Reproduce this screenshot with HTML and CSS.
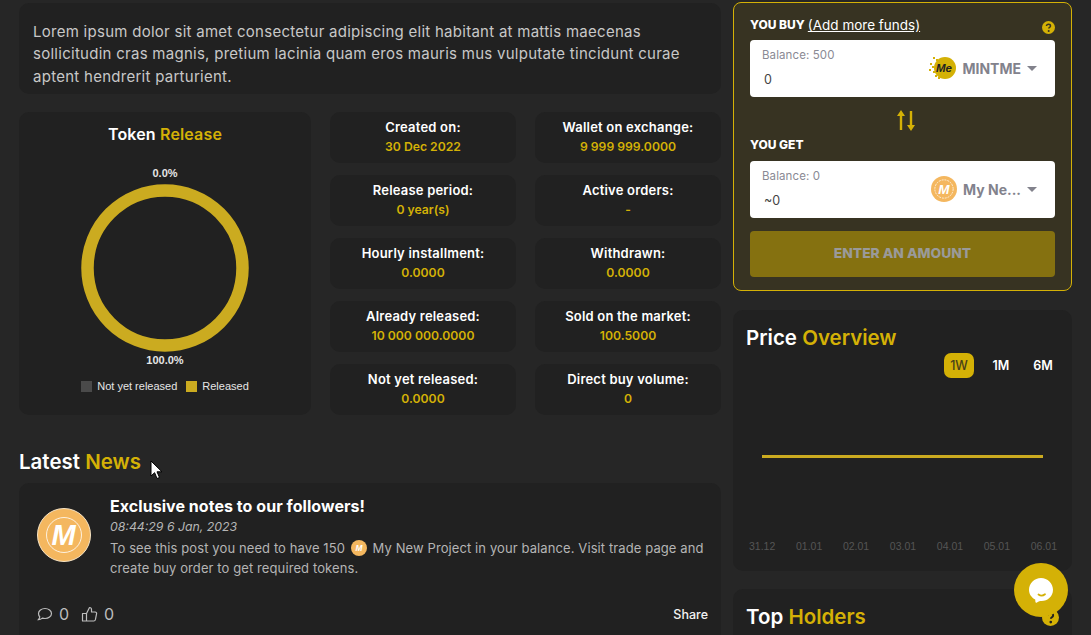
FILE: index.html
```html
<!DOCTYPE html>
<html lang="en">
<head>
    <meta charset="UTF-8">
    <meta name="viewport" content="width=device-width, initial-scale=1.0">
    <title>My New Project</title>
    <link rel="stylesheet" href="styles.css">
</head>
<body>
    <div class="page">
        <div class="left-col">
            <div class="card intro">
                Lorem ipsum dolor sit amet consectetur adipiscing elit habitant at mattis maecenas sollicitudin cras magnis, pretium lacinia quam eros mauris mus vulputate tincidunt curae aptent hendrerit parturient.
            </div>

            <div class="release-row">
                <div class="card release">
                    <h3 class="release-title">Token <span class="gold">Release</span></h3>
                    <div class="donut-label">0.0%</div>
                    <svg class="donut" width="168" height="168" viewBox="0 0 168 168">
                        <circle cx="84" cy="84" r="77.5" fill="none" stroke="#cbab20" stroke-width="12.5"/>
                    </svg>
                    <div class="donut-label">100.0%</div>
                    <div class="legend">
                        <span class="swatch swatch-grey"></span><span class="legend-text">Not yet released</span>
                        <span class="swatch swatch-gold"></span><span class="legend-text">Released</span>
                    </div>
                </div>

                <div class="stats">
                    <div class="card stat"><div class="stat-name">Created on:</div><div class="stat-value">30 Dec 2022</div></div>
                    <div class="card stat"><div class="stat-name">Wallet on exchange:</div><div class="stat-value">9 999 999.0000</div></div>
                    <div class="card stat"><div class="stat-name">Release period:</div><div class="stat-value">0 year(s)</div></div>
                    <div class="card stat"><div class="stat-name">Active orders:</div><div class="stat-value">-</div></div>
                    <div class="card stat"><div class="stat-name">Hourly installment:</div><div class="stat-value">0.0000</div></div>
                    <div class="card stat"><div class="stat-name">Withdrawn:</div><div class="stat-value">0.0000</div></div>
                    <div class="card stat"><div class="stat-name">Already released:</div><div class="stat-value">10 000 000.0000</div></div>
                    <div class="card stat"><div class="stat-name">Sold on the market:</div><div class="stat-value">100.5000</div></div>
                    <div class="card stat"><div class="stat-name">Not yet released:</div><div class="stat-value">0.0000</div></div>
                    <div class="card stat"><div class="stat-name">Direct buy volume:</div><div class="stat-value">0</div></div>
                </div>
            </div>

            <h2 class="news-heading">Latest <span class="gold">News</span></h2>

            <div class="card news">
                <div class="news-top">
                    <svg class="news-avatar" width="54" height="54" viewBox="0 0 54 54">
                        <circle cx="27" cy="27" r="26.5" fill="#f4b75f" stroke="#f6e3c4" stroke-width="1"/>
                        <circle cx="27" cy="27" r="17.5" fill="none" stroke="#fff" stroke-width="0.8"/>
                        <text class="logo-m" x="26.5" y="37" font-size="29" text-anchor="middle">M</text>
                    </svg>
                    <div class="news-body">
                        <div class="news-title">Exclusive notes to our followers!</div>
                        <div class="news-date">08:44:29 6 Jan, 2023</div>
                        <p class="news-text"><span>To see this post you need to have 150</span>
                            <svg class="news-token" width="16" height="16" viewBox="0 0 54 54">
                                <circle cx="27" cy="27" r="27" fill="#f4b75f"/>
                                <text class="logo-m" x="26.5" y="37" font-size="28" text-anchor="middle">M</text>
                            </svg>
                            <span>My New Project in your balance. Visit trade page and</span><br>
                            <span>create buy order to get required tokens.</span></p>
                    </div>
                </div>
                <div class="news-foot">
                    <svg width="17" height="17" viewBox="0 0 17 17" fill="none" stroke="#bdbdbd" stroke-width="1.2">
                        <path d="M9 2.5c3.6 0 6.5 2.2 6.5 5s-2.900 5-6.500 5c-.9 0-1.800-.1-2.600-.4-1 .8-2.400 1.500-4 1.500.700-.8 1.300-1.800 1.400-2.800C2.900 9.900 2.500 8.700 2.500 7.500c0-2.800 2.900-5 6.500-5z"/>
                    </svg>
                    <span class="count">0</span>
                    <svg class="thumb" width="17" height="17" viewBox="0 0 17 17" fill="none" stroke="#bdbdbd" stroke-width="1.200" stroke-linejoin="round">
                        <path d="M5.500 7.500 8.500 1.500c1.300 0 2 .9 2 2v2.500h3.700c1 0 1.600.8 1.400 1.700l-1.200 6c-.2.800-.8 1.300-1.600 1.300H5.500zM5.500 7.500H1.500v7.500h4"/>
                    </svg>
                    <span class="count">0</span>
                    <span class="share">Share</span>
                </div>
            </div>
        </div>

        <div class="right-col">
            <div class="swap">
                <div class="swap-head">
                    <span class="swap-label">YOU BUY</span>
                    <a class="add-funds" href="#">(Add more funds)</a>
                    <svg class="help" width="13" height="13" viewBox="0 0 13 13">
                        <circle cx="6.500" cy="6.500" r="6.500" fill="#d4b106"/>
                        <path d="M4.500 5.100c0-1.200.9-1.900 2-1.900s2 .7 2 1.700c0 1.400-1.700 1.400-1.700 2.500" fill="none" stroke="#373322" stroke-width="1.500"/>
                        <circle cx="6.700" cy="10" r="1" fill="#373322"/>
                    </svg>
                </div>
                <div class="swap-box">
                    <div class="swap-input">
                        <div class="balance">Balance: 500</div>
                        <div class="amount">0</div>
                    </div>
                    <div class="coin">
                        <svg width="27" height="24" viewBox="0 0 27 24">
                            <circle cx="16" cy="12" r="11" fill="#d4b106"/>
                            <g fill="#d4b106">
                                <rect x="4" y="1" width="2" height="2"/><rect x="7" y="3" width="2" height="2"/>
                                <rect x="1" y="7" width="2" height="2"/><rect x="3" y="10" width="2" height="2"/>
                                <rect x="0" y="13" width="2" height="2"/><rect x="4" y="15" width="2" height="2"/>
                                <rect x="6" y="19" width="2" height="2"/><rect x="9" y="21" width="2" height="2"/>
                            </g>
                            <text class="logo-me" x="15" y="16" font-size="11.500" text-anchor="middle">Me</text>
                        </svg>
                        <span class="coin-name">MINTME</span>
                        <span class="caret"></span>
                    </div>
                </div>
                <svg class="swap-arrows" width="18" height="21" viewBox="0 0 18 21" fill="#d4b106">
                    <path d="M4 0 8 6H5.200v14H2.800V6H0zM14 21l-4-6h2.800V1h2.400v14H18z"/>
                </svg>
                <div class="swap-label get-label">YOU GET</div>
                <div class="swap-box">
                    <div class="swap-input">
                        <div class="balance">Balance: 0</div>
                        <div class="amount">~0</div>
                    </div>
                    <div class="coin">
                        <svg class="coin-m" width="26" height="26" viewBox="0 0 54 54">
                            <circle cx="27" cy="27" r="27" fill="#f4b75f"/>
                            <circle cx="27" cy="27" r="19" fill="none" stroke="#fff" stroke-width="1.500" stroke-dasharray="4 2"/>
                            <text class="logo-m" x="26.500" y="37" font-size="28" text-anchor="middle">M</text>
                        </svg>
                        <span class="coin-name">My Ne...</span>
                        <span class="caret"></span>
                    </div>
                </div>
                <button class="swap-btn" type="button">ENTER AN AMOUNT</button>
            </div>

            <div class="card price">
                <h2 class="side-heading">Price <span class="gold">Overview</span></h2>
                <div class="ranges">
                    <span class="range range-on">1W</span>
                    <span class="range">1M</span>
                    <span class="range">6M</span>
                </div>
                <div class="chart">
                    <div class="chart-line"></div>
                </div>
                <div class="chart-dates">
                    <span>31.12</span><span>01.01</span><span>02.01</span><span>03.01</span><span>04.01</span><span>05.01</span><span>06.01</span>
                </div>
            </div>

            <div class="card holders">
                <h2 class="side-heading">Top <span class="gold">Holders</span></h2>
                <svg class="help" width="17" height="17" viewBox="0 0 13 13">
                    <circle cx="6.500" cy="6.500" r="6.500" fill="#d4b106"/>
                    <path d="M4.500 5.100c0-1.200.9-1.900 2-1.900s2 .7 2 1.700c0 1.400-1.700 1.400-1.700 2.500" fill="none" stroke="#212121" stroke-width="1.500"/>
                    <circle cx="6.700" cy="10" r="1" fill="#212121"/>
                </svg>
            </div>
        </div>
    </div>

    <!-- chat widget -->
    <div class="chat">
        <svg width="26" height="27" viewBox="0 0 26 27">
            <path d="M13 1c6.600 0 12 5.200 12 11.800S19.800 24 13.500 24c-1.300 0-3 .2-4.500 1.500-.8.600-1.500.3-1.600-.7l-.2-2.300C3.300 20.500 1 17 1 12.800 1 6.200 6.400 1 13 1z" fill="#fff"/>
            <path d="M10.500 17.500c1.800 1.300 4.600 1.300 6.500-.2" fill="none" stroke="#d4b106" stroke-width="1.800" stroke-linecap="round"/>
        </svg>
    </div>

    <svg class="cursor" width="13" height="20" viewBox="0 0 13 20">
        <path d="M1 1v15l3.600-3.300 2.400 5.800 2.500-1-2.500-5.700H12z" fill="#fff" stroke="#000" stroke-width="1"/>
    </svg>
</body>
</html>
```

FILE: styles.css
```css
* {
    box-sizing: border-box;
}

html, body {
    margin: 0;
    padding: 0;
    height: 635px;
    overflow: hidden;
}

body {
    background-color: #262626;
    color: #fff;
    font-family: Inter, "Open Sans", sans-serif;
}

.page {
    display: flex;
    gap: 12px;
    height: 635px;
    overflow: hidden;
    padding: 2px 19px 0;
}

.left-col {
    width: 702px;
    padding-top: 1px;
}

.right-col {
    width: 339px;
}

.card {
    background: #212121;
    border-radius: 10px;
}

.gold {
    color: #d4b106;
}

.intro {
    height: 91px;
    padding: 18px 14px 0;
    font-size: 15px;
    letter-spacing: 0.27px;
    line-height: 22.4px;
    color: #c8c8c8;
}

.release-row {
    display: flex;
    gap: 19px;
    margin-top: 18px;
}

.release {
    width: 292px;
    height: 303px;
    padding-top: 12px;
    display: flex;
    flex-direction: column;
    align-items: center;
}

.release-title {
    margin: 0 0 23px;
    font-size: 16px;
    letter-spacing: 0.15px;
    line-height: 20px;
    font-weight: 600;
}

.donut-label {
    font-family: "Liberation Sans", Arial, sans-serif;
    font-size: 11px;
    font-weight: bold;
    line-height: 13px;
    color: #e6e6e6;
}

.donut {
    display: block;
    margin: 4px 0 2px -1px;
}

.legend {
    display: flex;
    align-items: center;
    margin-top: 13px;
    font-family: "Liberation Sans", Arial, sans-serif;
    font-size: 11px;
    color: #e6e6e6;
}

.swatch {
    width: 11px;
    height: 11px;
    margin-right: 5px;
}

.swatch-grey {
    background: #4a4a4a;
}

.swatch-gold {
    background: #cbab20;
    margin-left: 9px;
}

.stats {
    width: 391px;
    display: grid;
    grid-template-columns: 186px 186px;
    grid-auto-rows: 51px;
    gap: 12px 19px;
}

.stat {
    text-align: center;
    padding-top: 6px;
    line-height: 19px;
    font-weight: 600;
}

.stat-name {
    font-size: 13px;
    letter-spacing: 0.2px;
}

.stat-value {
    font-size: 12.200px;
    color: #d4b106;
}

.news-heading {
    margin: 34px 0 8px;
    font-size: 20.500px;
    line-height: 26px;
    font-weight: 600;
}

.news {
    height: 170px;
    padding: 12px 13px;
}

.news-top {
    display: flex;
    height: 99px;
}

.news-avatar {
    margin: 13px 0 0 5px;
    flex: none;
}

.news-body {
    margin-left: 19px;
}

.news-title {
    font-size: 16px;
    letter-spacing: 0.05px;
    line-height: 22px;
    font-weight: 700;
}

.news-date {
    font-size: 12.300px;
    font-style: italic;
    line-height: 20px;
    color: #b5b5b5;
}

.news-text {
    margin: 1px 0 0;
    width: 600px;
    font-size: 13px;
    letter-spacing: 0.1px;
    line-height: 20px;
    color: #b5b5b5;
}

.news-token {
    vertical-align: -3px;
    margin: 0 2px;
}

.news-foot {
    display: flex;
    align-items: center;
    margin-top: 10px;
    padding-left: 4px;
}

.count {
    margin-left: 6px;
    font-size: 16px;
    color: #bdbdbd;
}

.thumb {
    margin-left: 12px;
}

.share {
    margin-left: auto;
    font-size: 12.500px;
    font-weight: 500;
    color: #f2f2f2;
}

.swap {
    height: 289px;
    padding: 13px 16px 0 16px;
    background: #373322;
    border: 1px solid #d4b106;
    border-radius: 8px;
}

.swap-head {
    display: flex;
    align-items: flex-start;
    height: 24px;
}

.swap-label {
    font-size: 12px;
    line-height: 18px;
    font-weight: 800;
}

.add-funds {
    margin-left: 3px;
    font-size: 13.500px;
    line-height: 18px;
    color: #fff;
}

.swap-head .help {
    margin: 5px 0 0 auto;
}

.swap-box {
    display: flex;
    justify-content: space-between;
    height: 57px;
    background: #fff;
    border-radius: 4px;
    padding: 8px 18px 0 12px;
}

.balance {
    font-size: 11.500px;
    letter-spacing: 0.1px;
    line-height: 14px;
    color: #8a8a94;
}

.amount {
    margin-top: 10px;
    margin-left: 2px;
    font-size: 12.500px;
    line-height: 16px;
    color: #444;
}

.coin {
    display: flex;
    align-items: center;
    height: 40px;
}

.coin-name {
    margin-left: 6px;
    font-size: 14px;
    font-weight: 700;
    color: #82828c;
}

.coin-m {
    margin-right: 0;
}

.caret {
    width: 0;
    height: 0;
    margin-left: 6px;
    border-left: 5px solid transparent;
    border-right: 5px solid transparent;
    border-top: 5px solid #82828c;
}

.swap-arrows {
    display: block;
    margin: 13px auto 0 147px;
}

.get-label {
    margin-top: 5px;
    height: 25px;
    line-height: 18px;
}

.swap-btn {
    display: block;
    width: 100%;
    height: 46px;
    margin-top: 13px;
    padding: 0 0 2px;
    border: none;
    border-radius: 4px;
    background: #857110;
    color: #9a9a9a;
    font-family: inherit;
    font-size: 13.800px;
    font-weight: 800;
}

.price {
    height: 261px;
    margin-top: 19px;
    padding: 13px 13px 0;
}

.side-heading {
    margin: 0;
    font-size: 20.500px;
    line-height: 30px;
    font-weight: 600;
}

.ranges {
    display: flex;
    justify-content: flex-end;
    gap: 4px;
    margin-right: 1px;
}

.range {
    width: 30px;
    height: 25px;
    margin-left: 8px;
    border-radius: 7px;
    text-align: center;
    font-size: 12.500px;
    line-height: 25px;
    font-weight: 600;
}

.range-on {
    background: #d4b106;
    color: #47401a;
    font-weight: 500;
}

.chart {
    height: 150px;
    padding-top: 77px;
}

.chart-line {
    height: 3px;
    margin: 0 16px;
    background: #cbab20;
}

.chart-dates {
    display: flex;
    justify-content: space-between;
    margin: 12px 2px 0 3px;
    font-family: "Liberation Sans", Arial, sans-serif;
    font-size: 10.500px;
    color: #555;
}

.holders {
    display: flex;
    justify-content: space-between;
    align-items: flex-start;
    height: 80px;
    margin-top: 18px;
    padding: 13px 13px 0;
}

.holders .help {
    margin-top: 7px;
}

.chat {
    position: fixed;
    left: 1014px;
    top: 563px;
    width: 54px;
    height: 54px;
    border-radius: 50%;
    background: #d4b106;
    display: flex;
    align-items: center;
    justify-content: center;
}

.cursor {
    position: fixed;
    left: 150px;
    top: 460px;
}

.logo-m {
    font-family: "Liberation Sans", Arial, sans-serif;
    font-weight: bold;
    font-style: italic;
    fill: #fff;
}

.logo-me {
    font-family: "Liberation Sans", Arial, sans-serif;
    font-weight: bold;
    font-style: italic;
    fill: #222;
}
```
